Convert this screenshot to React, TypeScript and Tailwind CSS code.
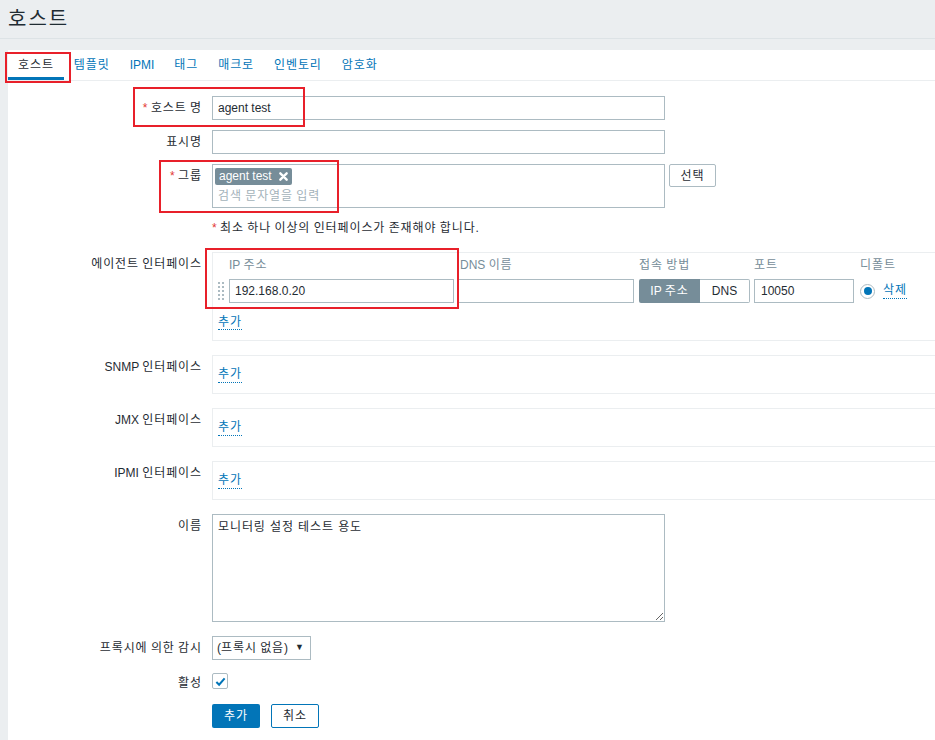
import React from 'react';

const tabs = ['호스트', '템플릿', 'IPMI', '태그', '매크로', '인벤토리', '암호화'];

// ハングルだけ字間を少し広げる(参照のフォント幅に合わせる)
const H: React.FC<{ children: string }> = ({ children }) => (
  <span>
    {children.split(/([가-힣]+)/).map((s, i) =>
      /[가-힣]/.test(s) ? (
        <span key={i} className="tracking-[0.9px]">
          {s}
        </span>
      ) : (
        s
      )
    )}
  </span>
);

interface RowProps {
  label?: string;
  required?: boolean;
  className?: string;
  labelClassName?: string;
  children?: React.ReactNode;
}

const Row: React.FC<RowProps> = ({ label, required, className, labelClassName, children }) => (
  <div className={`flex ${className || ''}`}>
    <div className={`w-[194px] shrink-0 text-right whitespace-nowrap ${labelClassName || 'h-6 leading-[24px]'}`}>
      {required && <span className="text-[#e33734]">* </span>}
      {label && <H>{label}</H>}
    </div>
    <div className="ml-[10px] flex-1 min-w-0">{children}</div>
  </div>
);

const AddLink: React.FC = () => (
  <span className="text-[#0275b8] leading-[15px] border-b border-dotted border-[#0275b8]">
    <H>추가</H>
  </span>
);

const EmptyInterface: React.FC<{ label: string }> = ({ label }) => (
  <Row label={label} className="mt-[14px]">
    <div className="h-[39px] border border-r-0 border-[#ebeef0] flex items-center pl-[5px]">
      <AddLink />
    </div>
  </Row>
);

export default function App() {
  return (
    <div className="relative min-h-screen w-[935px] overflow-hidden bg-[#ebeef0] font-['Liberation_Sans','Noto_Sans_CJK_KR',sans-serif] text-[12px] text-[#1f2c33]">
      {/* タイトル */}
      <div className="h-[39px] border-b border-[#dde3e6] px-2 flex items-center">
        <h1 className="text-[20px] leading-[24px] tracking-[2px] text-[#1f2c33]">호스트</h1>
      </div>

      <div className="mt-[11px] ml-2 bg-white pb-10">
        {/* タブ */}
        <div className="h-[31px] border-b border-[#ebeef0] flex">
          {tabs.map((t, i) => (
            <div
              key={t}
              className={`h-[30px] px-[10px] flex items-center leading-[18px] ${
                i === 0 ? 'text-[#1f2c33] border-b-[3px] border-[#0275b8] pt-[3px]' : 'text-[#0275b8]'
              }`}
            >
              <H>{t}</H>
            </div>
          ))}
        </div>

        <div className="pt-[15px]">
          <Row label="호스트 명" required>
            <input
              readOnly
              value="agent test"
              className="w-[453px] h-6 border border-[#acbbc2] px-[5px] outline-none text-[#1f2c33]"
            />
          </Row>

          <Row label="표시명" className="mt-[10px]">
            <input readOnly value="" className="w-[453px] h-6 border border-[#acbbc2] px-[5px] outline-none" />
          </Row>

          <Row label="그룹" required className="mt-[10px]">
            <div className="flex items-start">
              <div className="w-[453px] h-[44px] border border-[#acbbc2] p-[2px]">
                <div className="inline-flex items-center h-[17px] bg-[#768d99] text-white rounded-[2px] pl-[4px] pr-[4px] leading-[17px]">
                  agent test
                  <svg className="ml-[7px] w-[9px] h-[9px]" viewBox="0 0 10 10">
                    <path d="M1.5 1.5 L8.5 8.5 M8.5 1.5 L1.5 8.5" stroke="white" strokeWidth="2.6" strokeLinecap="round" />
                  </svg>
                </div>
                <div className="pl-[3px] mt-[2px] leading-[18px] text-[#a3b2ba]">
                  <H>검색 문자열을 입력</H>
                </div>
              </div>
              <button className="ml-[4px] w-[47px] h-[23px] border border-[#acbbc2] rounded-[2px] bg-white text-[#1f2c33]">
                <H>선택</H>
              </button>
            </div>
          </Row>

          <Row className="mt-[11px]" labelClassName="h-[18px]">
            <div className="leading-[18px]">
              <span className="text-[#e33734]">*</span> <H>최소 하나 이상의 인터페이스가 존재해야 합니다.</H>
            </div>
          </Row>

          {/* エージェントインターフェース */}
          <Row label="에이전트 인터페이스" className="mt-[15px]">
            <div className="h-[89px] border border-r-0 border-[#ebeef0]">
              <div className="flex h-[26px] leading-[24px] text-[#768d99] whitespace-nowrap">
                <div className="ml-[5px] w-[6px]" />
                <div className="ml-[5px] w-[225px]">
                  <H>IP 주소</H>
                </div>
                <div className="ml-[4px] w-[176px] pl-[2px]">
                  <H>DNS 이름</H>
                </div>
                <div className="ml-[5px] w-[111px]">
                  <H>접속 방법</H>
                </div>
                <div className="ml-[4px] w-[100px]">
                  <H>포트</H>
                </div>
                <div className="ml-[6px]">
                  <H>디폴트</H>
                </div>
              </div>
              <div className="flex h-6 items-center">
                <div className="ml-[5px] w-[6px] grid grid-cols-2 gap-[2px]">
                  {Array.from({ length: 10 }).map((_, i) => (
                    <span key={i} className="w-[2px] h-[2px] bg-[#acbbc2]" />
                  ))}
                </div>
                <input
                  readOnly
                  value="192.168.0.20"
                  className="ml-[5px] w-[225px] h-6 border border-[#acbbc2] px-[5px] outline-none"
                />
                <input readOnly value="" className="ml-[4px] w-[176px] h-6 border border-[#acbbc2] outline-none" />
                <div className="ml-[5px] w-[111px] h-6 flex">
                  <div className="w-[61px] h-6 bg-[#768d99] text-white rounded-l-[2px] flex items-center justify-center whitespace-nowrap">
                    <H>IP 주소</H>
                  </div>
                  <div className="w-[50px] h-6 border border-l-0 border-[#acbbc2] bg-white rounded-r-[2px] flex items-center justify-center">
                    DNS
                  </div>
                </div>
                <input
                  readOnly
                  value="10050"
                  className="ml-[4px] w-[100px] h-6 border border-[#acbbc2] px-[6px] outline-none"
                />
                <div className="ml-[6px] w-[15px] h-[15px] rounded-full border border-[#acbbc2] flex items-center justify-center">
                  <span className="w-[8px] h-[8px] rounded-full bg-[#0275b8]" />
                </div>
                <span className="ml-[8px] text-[#0275b8] leading-[15px] border-b border-dotted border-[#0275b8]">
                  <H>삭제</H>
                </span>
              </div>
              <div className="mt-[10px] pl-[5px]">
                <AddLink />
              </div>
            </div>
          </Row>

          <EmptyInterface label="SNMP 인터페이스" />
          <EmptyInterface label="JMX 인터페이스" />
          <EmptyInterface label="IPMI 인터페이스" />

          <Row label="이름" className="mt-[14px]">
            <textarea
              readOnly
              value="모니터링 설정 테스트 용도"
              className="block w-[453px] h-[108px] border border-[#acbbc2] px-[5px] pt-[3px] leading-[18px] tracking-[0.9px] outline-none"
            />
          </Row>

          <Row label="프록시에 의한 감시" className="mt-[14px]">
            <div className="w-[99px] h-6 border border-[#acbbc2] flex items-center justify-between pl-[4px] pr-[6px] whitespace-nowrap">
              <H>(프록시 없음)</H>
              <span className="text-[9px]">▼</span>
            </div>
          </Row>

          <Row label="활성" className="mt-[13px] items-center" labelClassName="h-[16px] leading-[16px] pt-[2px]">
            <div className="w-[16px] h-[16px] border border-[#acbbc2] rounded-[2px] flex items-center justify-center">
              <svg className="w-[11px] h-[11px]" viewBox="0 0 12 12">
                <path d="M1.5 6.5 L4.5 9.5 L10.5 2.5" fill="none" stroke="#0275b8" strokeWidth="2.2" />
              </svg>
            </div>
          </Row>

          <Row className="mt-[15px]" labelClassName="h-6">
            <div className="flex">
              <button className="w-[48px] h-6 bg-[#0275b8] text-white rounded-[2px]">
                <H>추가</H>
              </button>
              <button className="ml-[11px] w-[48px] h-6 border border-[#0275b8] bg-white text-[#1f2c33] rounded-[2px]">
                <H>취소</H>
              </button>
            </div>
          </Row>
        </div>
      </div>

      {/* 赤い注記枠 */}
      <div className="absolute left-[5px] top-[52px] w-[66px] h-[31px] border-2 border-[#e8202a] pointer-events-none" />
      <div className="absolute left-[133px] top-[87px] w-[172px] h-[40px] border-2 border-[#e8202a] pointer-events-none" />
      <div className="absolute left-[159px] top-[160px] w-[180px] h-[53px] border-2 border-[#e8202a] pointer-events-none" />
      <div className="absolute left-[205px] top-[248px] w-[254px] h-[61px] border-2 border-[#e8202a] pointer-events-none" />
    </div>
  );
}
